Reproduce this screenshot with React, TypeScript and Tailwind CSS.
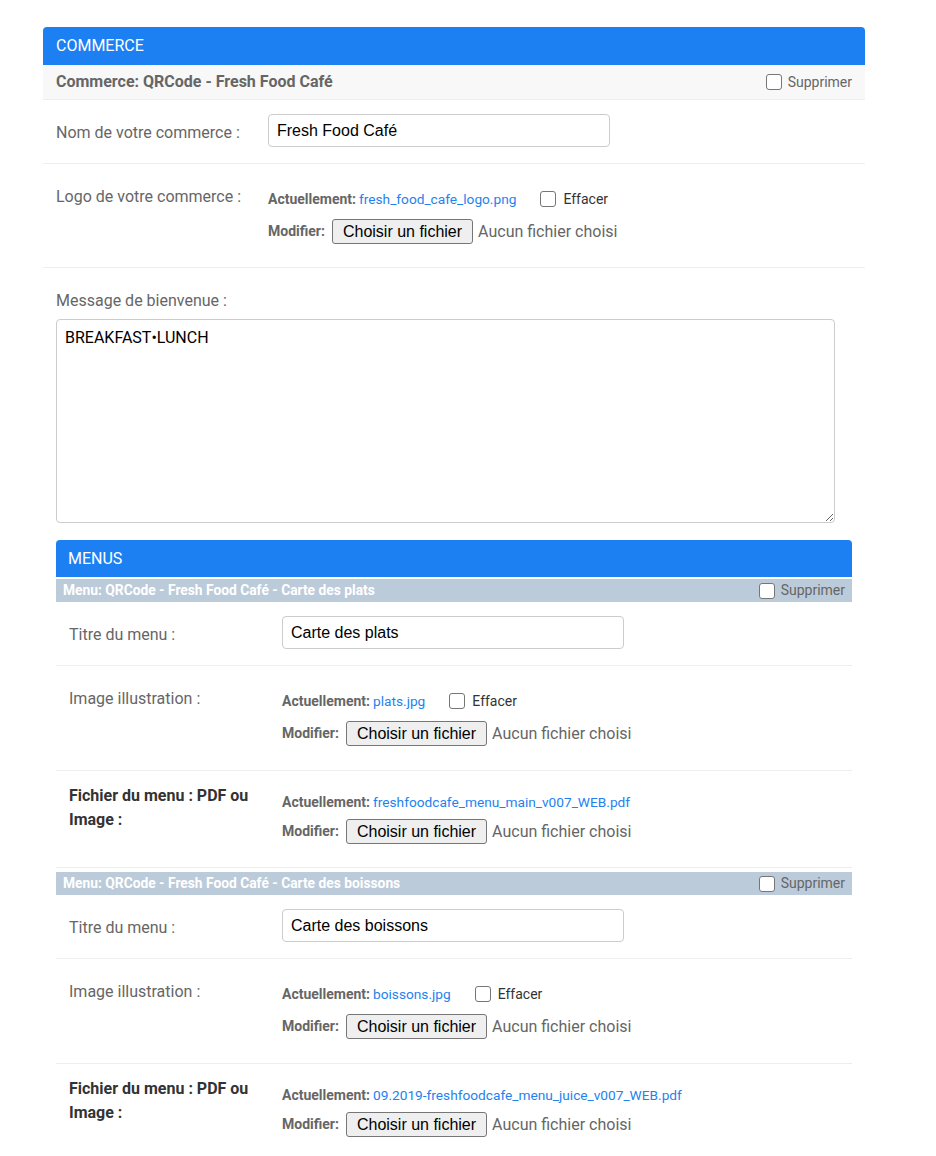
import React from "react";

const BLUE = "bg-[#1c80f3]";

function Box() {
  return <span className="inline-block h-4 w-4 shrink-0 rounded-[3px] border border-[#767676] bg-white" />;
}

function FileButton() {
  return (
    <span className="inline-flex h-[25px] items-center rounded-[3px] border border-[#767676] bg-[#efefef] px-[10px] font-['Liberation_Sans',Arial,sans-serif] text-[16px] text-black">
      Choisir un fichier
    </span>
  );
}

function FileWidget({ file, clearable, gap }: { file: string; clearable?: boolean; gap: string }) {
  return (
    <div className="flex flex-col">
      <div className="flex h-5 items-center text-[14px]">
        <span className="font-bold text-[#666]">Actuellement:</span>
        <span className="ml-[3px] text-[13.7px] text-[#1e82f0]">{file}</span>
        {clearable ? (
          <span className="ml-[24px] flex items-center gap-[7px] text-[#333]">
            <Box />
            Effacer
          </span>
        ) : null}
      </div>
      <div className={`${gap} flex items-center`}>
        <span className="mr-[7px] text-[14px] font-bold text-[#666]">Modifier:</span>
        <FileButton />
        <span className="ml-[5px] text-[16px] text-[#666]">Aucun fichier choisi</span>
      </div>
    </div>
  );
}

function TextRow({ label, value, labelWidth }: { label: string; value: string; labelWidth: string }) {
  return (
    <div className="flex h-[64px] border-b border-[#eee] px-[13px] pt-[14px]">
      <div className={`${labelWidth} shrink-0 pt-[9px] text-[16px] leading-5 text-[#666]`}>{label}</div>
      <div className="flex h-[33px] w-[342px] items-center rounded-[4px] border border-[#ccc] px-2 font-['Liberation_Sans',Arial,sans-serif] text-[16px] text-black">
        {value}
      </div>
    </div>
  );
}

function ImageRow({ label, file, labelWidth, height }: { label: string; file: string; labelWidth: string; height: string }) {
  return (
    <div className={`flex ${height} border-b border-[#eee] px-[13px] pt-[23px]`}>
      <div className={`${labelWidth} shrink-0 text-[16px] leading-5 text-[#666]`}>{label}</div>
      <div className="pt-[2px]">
        <FileWidget file={file} clearable gap="mt-[10px]" />
      </div>
    </div>
  );
}

function MenuFileRow({ file }: { file: string }) {
  return (
    <div className="flex h-[97px] border-b border-[#eee] px-[13px] pt-[13px]">
      <div className="w-[213px] shrink-0 pr-4 text-[16px] font-bold leading-6 text-[#333]">
        Fichier du menu : PDF ou Image :
      </div>
      <div className="pt-2">
        <FileWidget file={file} gap="mt-[7px]" />
      </div>
    </div>
  );
}

function MenuBlock({ title, name, image, file, first }: { title: string; name: string; image: string; file: string; first?: boolean }) {
  return (
    <div className={first ? "mt-[2px]" : "mt-[4px]"}>
      <div className="flex h-[23px] items-center justify-between bg-[#bccbda] pl-[7px] pr-[7px]">
        <span className="text-[13.8px] font-bold text-white">Menu: QRCode - Fresh Food Café - {title}</span>
        <span className="flex items-center gap-[6px] text-[14px] text-[#666]">
          <Box />
          Supprimer
        </span>
      </div>
      <TextRow label="Titre du menu :" value={name} labelWidth="w-[213px]" />
      <ImageRow label="Image illustration :" file={image} labelWidth="w-[213px]" height="h-[105px]" />
      <MenuFileRow file={file} />
    </div>
  );
}

export default function App() {
  return (
    <div className="min-h-[1156px] bg-white pt-[27px] font-['Roboto',sans-serif]">
      <section className="ml-[43px] w-[822px]">
        <div className={`flex h-[38px] items-center rounded-t-[4px] ${BLUE} px-[13px] text-[16px] text-white`}>
          COMMERCE
        </div>
        <div className="flex h-[35px] items-center justify-between border-b border-[#eee] bg-[#f8f8f8] px-[13px]">
          <span className="text-[16px] font-bold text-[#666]">Commerce: QRCode - Fresh Food Café</span>
          <span className="flex items-center gap-[6px] text-[14px] text-[#666]">
            <Box />
            Supprimer
          </span>
        </div>
        <TextRow label="Nom de votre commerce :" value="Fresh Food Café" labelWidth="w-[212px]" />
        <ImageRow label="Logo de votre commerce :" file="fresh_food_cafe_logo.png" labelWidth="w-[212px]" height="h-[104px]" />
        <div className="px-[13px] pt-[23px]">
          <div className="text-[16px] leading-5 text-[#666]">Message de bienvenue :</div>
          <textarea
            readOnly
            defaultValue="BREAKFAST•LUNCH"
            className="mt-2 block h-[204px] w-[779px] rounded-[4px] border border-[#ccc] px-2 py-[6px] font-['Roboto',sans-serif] text-[16px] text-black outline-none"
          />
        </div>
        <div className="mx-[13px] mt-[17px]">
          <div className={`flex h-[37px] items-center rounded-t-[4px] ${BLUE} px-3 text-[16px] text-white`}>MENUS</div>
          <MenuBlock
            first
            title="Carte des plats"
            name="Carte des plats"
            image="plats.jpg"
            file="freshfoodcafe_menu_main_v007_WEB.pdf"
          />
          <MenuBlock
            title="Carte des boissons"
            name="Carte des boissons"
            image="boissons.jpg"
            file="09.2019-freshfoodcafe_menu_juice_v007_WEB.pdf"
          />
        </div>
      </section>
    </div>
  );
}
